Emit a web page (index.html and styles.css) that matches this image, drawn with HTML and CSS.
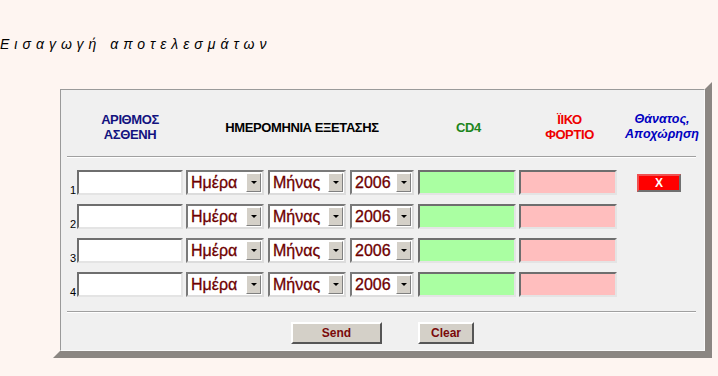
FILE: index.html
```html
<!DOCTYPE html>
<html lang="el">
<head>
  <meta charset="UTF-8">
  <title>Εισαγωγή αποτελεσμάτων</title>
  <link rel="stylesheet" href="styles.css">
</head>
<body>

<div class="page-title">Εισαγωγή αποτελεσμάτων</div>

<!-- Πίνακας αποτελεσμάτων -->
<div class="panel">
  <div class="panel-inner">

    <div class="grid head">
      <div></div>
      <div class="h-id">ΑΡΙΘΜΟΣ<br>ΑΣΘΕΝΗ</div>
      <div class="h-date">ΗΜΕΡΟΜΗΝΙΑ ΕΞΕΤΑΣΗΣ</div>
      <div class="h-cd4">CD4</div>
      <div class="h-load">ΪΙΚΟ<br>ΦΟΡΤΙΟ</div>
      <div class="h-death">Θάνατος,<br>Αποχώρηση</div>
    </div>

    <div class="rule"></div>

    <div class="rows">
      <div class="grid row">
        <div class="num">1</div>
        <div><input class="field" type="text"></div>
        <div><div class="select day"><span>Ημέρα</span><i class="arrow"></i></div></div>
        <div><div class="select month"><span>Μήνας</span><i class="arrow"></i></div></div>
        <div><div class="select year"><span>2006</span><i class="arrow"></i></div></div>
        <div><input class="field cd4" type="text"></div>
        <div><input class="field load" type="text"></div>
        <div class="x-cell"><button class="x-btn">X</button></div>
      </div>
      <div class="grid row">
        <div class="num">2</div>
        <div><input class="field" type="text"></div>
        <div><div class="select day"><span>Ημέρα</span><i class="arrow"></i></div></div>
        <div><div class="select month"><span>Μήνας</span><i class="arrow"></i></div></div>
        <div><div class="select year"><span>2006</span><i class="arrow"></i></div></div>
        <div><input class="field cd4" type="text"></div>
        <div><input class="field load" type="text"></div>
        <div></div>
      </div>
      <div class="grid row">
        <div class="num">3</div>
        <div><input class="field" type="text"></div>
        <div><div class="select day"><span>Ημέρα</span><i class="arrow"></i></div></div>
        <div><div class="select month"><span>Μήνας</span><i class="arrow"></i></div></div>
        <div><div class="select year"><span>2006</span><i class="arrow"></i></div></div>
        <div><input class="field cd4" type="text"></div>
        <div><input class="field load" type="text"></div>
        <div></div>
      </div>
      <div class="grid row">
        <div class="num">4</div>
        <div><input class="field" type="text"></div>
        <div><div class="select day"><span>Ημέρα</span><i class="arrow"></i></div></div>
        <div><div class="select month"><span>Μήνας</span><i class="arrow"></i></div></div>
        <div><div class="select year"><span>2006</span><i class="arrow"></i></div></div>
        <div><input class="field cd4" type="text"></div>
        <div><input class="field load" type="text"></div>
        <div></div>
      </div>
    </div>

    <div class="rule"></div>

    <!-- Κουμπιά -->
    <div class="actions">
      <button class="btn send">Send</button>
      <button class="btn clear">Clear</button>
    </div>

  </div>
</div>

</body>
</html>
```

FILE: styles.css
```css
/* Βασικά */
body {
  margin: 0;
  background: #fef5f1;
  font-family: "Liberation Sans", Arial, sans-serif;
  color: #000;
}

.page-title {
  padding-top: 36px;
  height: 16px;
  line-height: 16px;
  font-size: 14px;
  font-style: italic;
  letter-spacing: 5px;
}

/* Πλαίσιο */
.panel {
  margin: 30px 0 0 53px;
  width: 645px;
  border: 7px solid;
  border-color: #fef5f1 #8b8682 #8b8682 #fef5f1;
}

.panel-inner {
  background: #f0f0f0;
  border: 1px solid;
  border-color: #9a9a9a #fafafa #fafafa #9a9a9a;
  padding-bottom: 6px;
}

.grid {
  display: grid;
  grid-template-columns: 16px 109px 82px 82px 68px 101px 101px 1fr;
}

/* Επικεφαλίδες */
.head {
  padding-top: 22px;
  height: 30px;
  align-items: center;
  text-align: center;
  font-size: 13px;
  letter-spacing: -0.4px;
  font-weight: bold;
  line-height: 15px;
}

.h-id { color: #13137f; padding-right: 3px; }
.h-date { grid-column: 3 / span 3; }
.h-cd4 { color: #1c861c; }
.h-load { color: #ee0000; }
.h-death { color: #0000c0; font-style: italic; letter-spacing: 0; font-size: 12.5px; }

.rule {
  margin: 14px 8px 0 6px;
  border-top: 1px solid #a0a0a0;
  border-bottom: 1px solid #ffffff;
}

/* Γραμμές */
.rows {
  display: flex;
  flex-direction: column;
  gap: 9px;
  padding: 12px 0 0;
}

.row {
  height: 25px;
  align-items: end;
}

.num {
  font-size: 11px;
  line-height: 11px;
  text-align: right;
  padding-right: 1px;
  margin-bottom: -1px;
}

.field {
  display: block;
  box-sizing: border-box;
  width: 106px;
  height: 25px;
  margin: 0;
  padding: 0;
  background: #fff;
  border: 2px solid;
  border-color: #6e6e6e #e4e4e4 #e4e4e4 #6e6e6e;
}

.cd4, .load { width: 98px; }
.cd4 { background: #aaffa2; }
.load { background: #ffbebe; }

.select {
  box-sizing: border-box;
  height: 25px;
  width: 78px;
  display: flex;
  align-items: center;
  background: #fff;
  border: 2px solid;
  border-color: #7a7a7a #dcdcdc #dcdcdc #7a7a7a;
  color: #6e0000;
  font-size: 16px;
  -webkit-text-stroke: 0.3px #6e0000;
}

.select span {
  flex: 1;
  padding-left: 3px;
}

.year { width: 64px; }

.arrow {
  box-sizing: border-box;
  width: 15px;
  height: 19px;
  margin-right: 1px;
  background: #d4d0c8;
  border: 1px solid;
  border-color: #ffffff #808080 #808080 #ffffff;
  display: flex;
  align-items: center;
  justify-content: center;
}

.arrow::after {
  content: "";
  border-left: 3px solid transparent;
  border-right: 3px solid transparent;
  border-top: 3px solid #000;
}

.x-cell {
  align-self: center;
  padding-left: 17px;
}

.x-btn {
  display: block;
  width: 44px;
  height: 18px;
  margin: 0;
  padding: 0;
  background: #ff0000;
  color: #fff;
  font-family: "Liberation Sans", Arial, sans-serif;
  font-weight: bold;
  font-size: 12px;
  border: 2px solid;
  border-color: #f05050 #707070 #707070 #f05050;
}

/* Κουμπιά */
.actions {
  display: flex;
  justify-content: center;
  gap: 36px;
  padding-top: 9px;
}

.btn {
  height: 22px;
  margin: 0;
  padding: 0;
  background: #d4d0c8;
  color: #7a0a0a;
  font-family: "Liberation Sans", Arial, sans-serif;
  font-weight: bold;
  font-size: 12px;
  border: 2px solid;
  border-color: #ffffff #555555 #555555 #ffffff;
}

.send { width: 91px; }
.clear { width: 56px; }
```
